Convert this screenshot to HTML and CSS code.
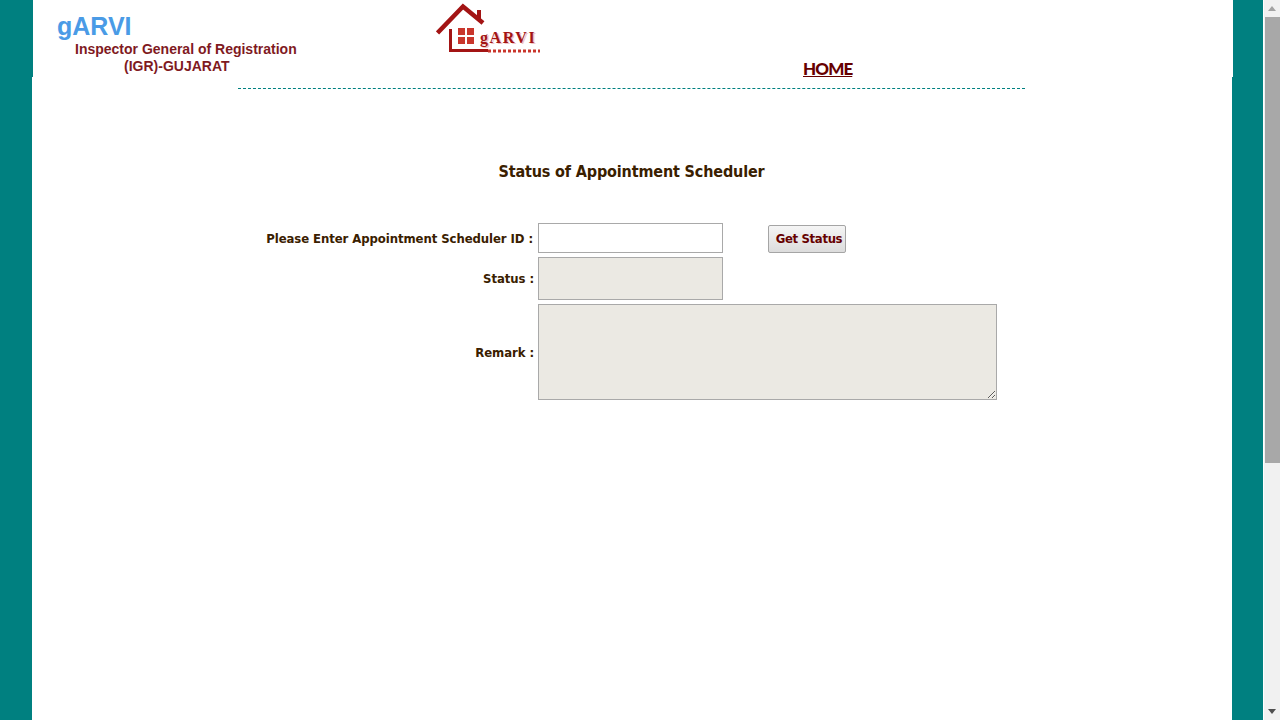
FILE: index.html
```html
<!DOCTYPE html>
<html lang="en">
<head>
  <meta charset="UTF-8">
  <title>Status of Appointment Scheduler</title>
  <link rel="stylesheet" href="styles.css">
</head>
<body>
  <div class="viewport">
    <div class="page">
      <header class="header">
        <div class="brand">
          <div class="brand-name">gARVI</div>
          <div class="brand-line1">Inspector General of Registration</div>
          <div class="brand-line2">(IGR)-GUJARAT</div>
        </div>
        <svg class="logo" width="106" height="52" viewBox="0 0 106 52">
          <rect x="41" y="7" width="4" height="9" fill="#a31414"/>
          <path d="M1.5 30 L27 3.5 L47 20" fill="none" stroke="#a31414" stroke-width="4.5"/>
          <path d="M10 27 L27 8 L42 21" fill="none" stroke="#fff" stroke-width="1"/>
          <path d="M14.5 26 V47.5 H52" fill="none" stroke="#a31414" stroke-width="3"/>
          <rect x="22" y="25" width="7" height="7" fill="#c9362c"/>
          <rect x="31" y="25" width="7" height="7" fill="#c9362c"/>
          <rect x="22" y="34" width="7" height="7" fill="#c9362c"/>
          <rect x="31" y="34" width="7" height="7" fill="#c9362c"/>
          <text x="45.5" y="41" class="logo-shadow">gARVI</text>
          <text x="44" y="39.5" class="logo-text">gARVI</text>
          <path d="M52 48 H104" fill="none" stroke="#c9362c" stroke-width="3" stroke-dasharray="3 2"/>
        </svg>
        <a class="home-link" href="#">HOME</a>
      </header>
      <main class="content">
        <div class="inner">
          <h1 class="title">Status of Appointment Scheduler</h1>
          <form class="form">
            <label class="label label-id">Please Enter Appointment Scheduler ID :</label>
            <input class="field" type="text">
            <button class="btn" type="button">Get Status</button>
            <label class="label label-status">Status :</label>
            <input class="field field-status" type="text" disabled>
            <label class="label label-remark">Remark :</label>
            <textarea class="field field-remark" disabled></textarea>
          </form>
        </div>
      </main>
    </div>
    <div class="scrollbar">
      <div class="arrow arrow-up"></div>
      <div class="track"><div class="thumb"></div></div>
      <div class="arrow arrow-down"></div>
    </div>
  </div>
</body>
</html>
```

FILE: styles.css
```css
* {
  box-sizing: border-box;
}

html, body {
  margin: 0;
  height: 100%;
  overflow: hidden;
}

body {
  background: #fff;
  font-family: "Liberation Sans", Arial, sans-serif;
}

.viewport {
  display: flex;
  height: 720px;
}

.page {
  width: 1263px;
  height: 720px;
  margin-right: 1px;
  padding-left: 32px;
  padding-right: 31px;
  background: #008080;
}

.header {
  display: flex;
  height: 77px;
  margin-left: 1px;
  margin-right: -1px;
  background: #fff;
}

.brand {
  width: 403px;
  padding: 12px 0 0 24px;
  color: #7f1a1f;
  font-weight: bold;
  font-size: 14px;
}

.brand-name {
  color: #4a9be6;
  font-size: 25px;
  line-height: 29px;
}

.brand-line1 {
  padding-left: 18px;
  line-height: 17px;
}

.brand-line2 {
  padding-left: 67px;
  line-height: 17px;
}

.logo {
  flex: none;
  margin-top: 3px;
}

.logo-text,
.logo-shadow {
  font-family: "Liberation Serif", serif;
  font-weight: bold;
  font-size: 16px;
  letter-spacing: 1.6px;
  fill: #a31414;
}

.logo-shadow {
  fill: #f0c4c4;
}

.home-link {
  align-self: flex-end;
  margin-left: 261px;
  margin-bottom: -4px;
  color: #660000;
  font-family: Lato, sans-serif;
  font-weight: 900;
  font-size: 17px;
  line-height: 24px;
  letter-spacing: -0.9px;
  text-decoration: underline;
}

.content {
  height: 643px;
  padding: 11px 207px 0 206px;
  background: #fff;
}

.inner {
  border-top: 1px dashed #008080;
}

.title {
  margin: 73px 0 0;
  color: #3a2000;
  font-family: "DejaVu Sans Condensed", "DejaVu Sans", sans-serif;
  font-size: 16px;
  font-weight: bold;
  line-height: 20px;
  letter-spacing: -0.15px;
  text-align: center;
}

.form {
  display: grid;
  grid-template-columns: 300px 185px 45px 78px 151px;
  row-gap: 4px;
  margin-top: 41px;
  align-items: center;
}

.label {
  padding-right: 4px;
  color: #3a2000;
  font-family: "DejaVu Sans Condensed", "DejaVu Sans", sans-serif;
  font-size: 13px;
  font-weight: bold;
  letter-spacing: -0.08px;
  text-align: right;
  white-space: nowrap;
}

.label-id {
  padding-right: 5px;
}

.field {
  display: block;
  width: 185px;
  height: 30px;
  margin: 0;
  border: 1px solid #a9a9a9;
  border-radius: 0;
  background: #fff;
}

.btn {
  grid-column: 4;
  align-self: end;
  height: 28px;
  padding: 0 0 2px 4px;
  border: 1px solid #a5a5a5;
  border-radius: 2px;
  background: linear-gradient(#f5f5f5, #dcdcdc);
  color: #660000;
  font-family: "DejaVu Sans Condensed", "DejaVu Sans", sans-serif;
  font-size: 13px;
  font-weight: bold;
  letter-spacing: -0.35px;
  white-space: nowrap;
}

.label-status,
.label-remark {
  grid-column: 1;
}

.field-status {
  height: 43px;
  background: #ebe9e3;
}

.field-remark {
  grid-column: 2 / 6;
  width: 459px;
  height: 96px;
  background: #ebe9e3;
}

.scrollbar {
  display: flex;
  flex-direction: column;
  width: 16px;
  height: 720px;
  background: #f1f1f1;
}

.arrow {
  position: relative;
  height: 17px;
}

.arrow::after {
  content: "";
  position: absolute;
  left: 4px;
  border-left: 4px solid transparent;
  border-right: 4px solid transparent;
}

.arrow-up::after {
  top: 6px;
  border-bottom: 5px solid #a3a3a3;
}

.arrow-down::after {
  bottom: 6px;
  border-top: 5px solid #505050;
}

.track {
  flex: 1;
}

.thumb {
  width: 15px;
  height: 446px;
  margin-left: 1px;
  background: #a8a8a8;
}
```
